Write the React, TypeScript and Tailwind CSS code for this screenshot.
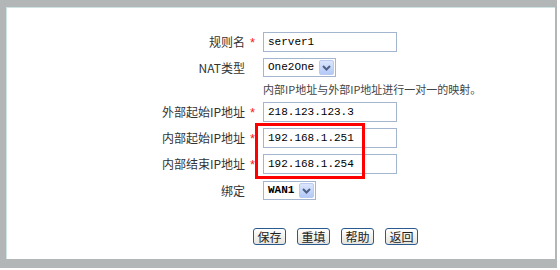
import React from 'react';

const CJK = "font-['Noto_Sans_CJK_SC','Noto_Sans',sans-serif]";
const MONO = "font-['Liberation_Mono','Noto_Sans_CJK_SC',monospace]";

function Label({ text, required }: { text: string; required?: boolean }) {
  return (
    <>
      <div className={`w-[238px] shrink-0 text-right text-[12px] leading-none text-[#333] ${CJK}`}>{text}</div>
      <div className="w-[18px] shrink-0 pl-[5px] text-[13px] leading-none text-[#ff2020] font-['Liberation_Sans',sans-serif]">
        {required ? '*' : ''}
      </div>
    </>
  );
}

function TextInput({ value }: { value: string }) {
  return (
    <div className={`flex h-[20px] w-[134px] items-center border border-[#a4b6cf] bg-white pl-[4px] text-[11px] text-black ${MONO}`}>
      {value}
    </div>
  );
}

function Select({ value, width, bold }: { value: string; width: string; bold?: boolean }) {
  return (
    <div className={`flex h-[19px] ${width} items-center justify-between border border-[#a4b6cf] bg-white pl-[4px] pr-px`}>
      <span className={`text-[11px] text-black ${MONO} ${bold ? 'font-bold' : ''}`}>{value}</span>
      <div className="flex h-[15px] w-[15px] items-center justify-center rounded-[2px] border border-[#b9cbf0] bg-gradient-to-b from-[#dbe6fd] to-[#b3c9f7]">
        <svg width="9" height="6" viewBox="0 0 9 6">
          <path d="M1 1 L4.5 4.5 L8 1" fill="none" stroke="#4d6185" strokeWidth="2" />
        </svg>
      </div>
    </div>
  );
}

function Btn({ text }: { text: string }) {
  return (
    <div className={`flex h-[17px] w-[33px] items-center justify-center rounded-[3px] border border-[#2a5a8e] bg-gradient-to-b from-white to-[#e6e4dc] text-[12px] leading-none text-[#222] ${CJK}`}>
      {text}
    </div>
  );
}

export default function App() {
  return (
    <div className="w-[560px] h-[270px] bg-white">
      <div className="flex h-[268px] w-[557px] flex-col bg-[#b3b6b6] pl-[6px] pt-[7px] pr-[2px] pb-[9px]">
        <div className="relative flex flex-1 flex-col border-l border-t border-[#cfe3e3] bg-white pt-[24px]">
          <div className="flex h-[20px] items-center">
            <Label text="规则名" required />
            <TextInput value="server1" />
          </div>
          <div className="mt-[6px] flex h-[19px] items-center">
            <Label text="NAT类型" />
            <Select value="One2One" width="w-[73px]" />
          </div>
          <div className="flex h-[25px] items-center">
            <div className="w-[256px] shrink-0" />
            <div className={`text-[11px] leading-none text-[#444] ${CJK}`}>内部IP地址与外部IP地址进行一对一的映射。</div>
          </div>
          <div className="flex h-[20px] items-center">
            <Label text="外部起始IP地址" required />
            <TextInput value="218.123.123.3" />
          </div>
          <div className="mt-[6px] flex h-[20px] items-center">
            <Label text="内部起始IP地址" required />
            <TextInput value="192.168.1.251" />
          </div>
          <div className="mt-[6px] flex h-[20px] items-center">
            <Label text="内部结束IP地址" required />
            <TextInput value="192.168.1.254" />
          </div>
          <div className="mt-[7px] flex h-[19px] items-center">
            <Label text="绑定" />
            <Select value="WAN1" width="w-[53px]" bold />
          </div>
          <div className="ml-[246px] mt-[28px] flex gap-[11px]">
            <Btn text="保存" />
            <Btn text="重填" />
            <Btn text="帮助" />
            <Btn text="返回" />
          </div>

          {/* red highlight annotation */}
          <div className="absolute left-[248px] top-[115px] h-[56px] w-[110px] border-[3px] border-[#ff0000]" />
        </div>
      </div>
    </div>
  );
}
